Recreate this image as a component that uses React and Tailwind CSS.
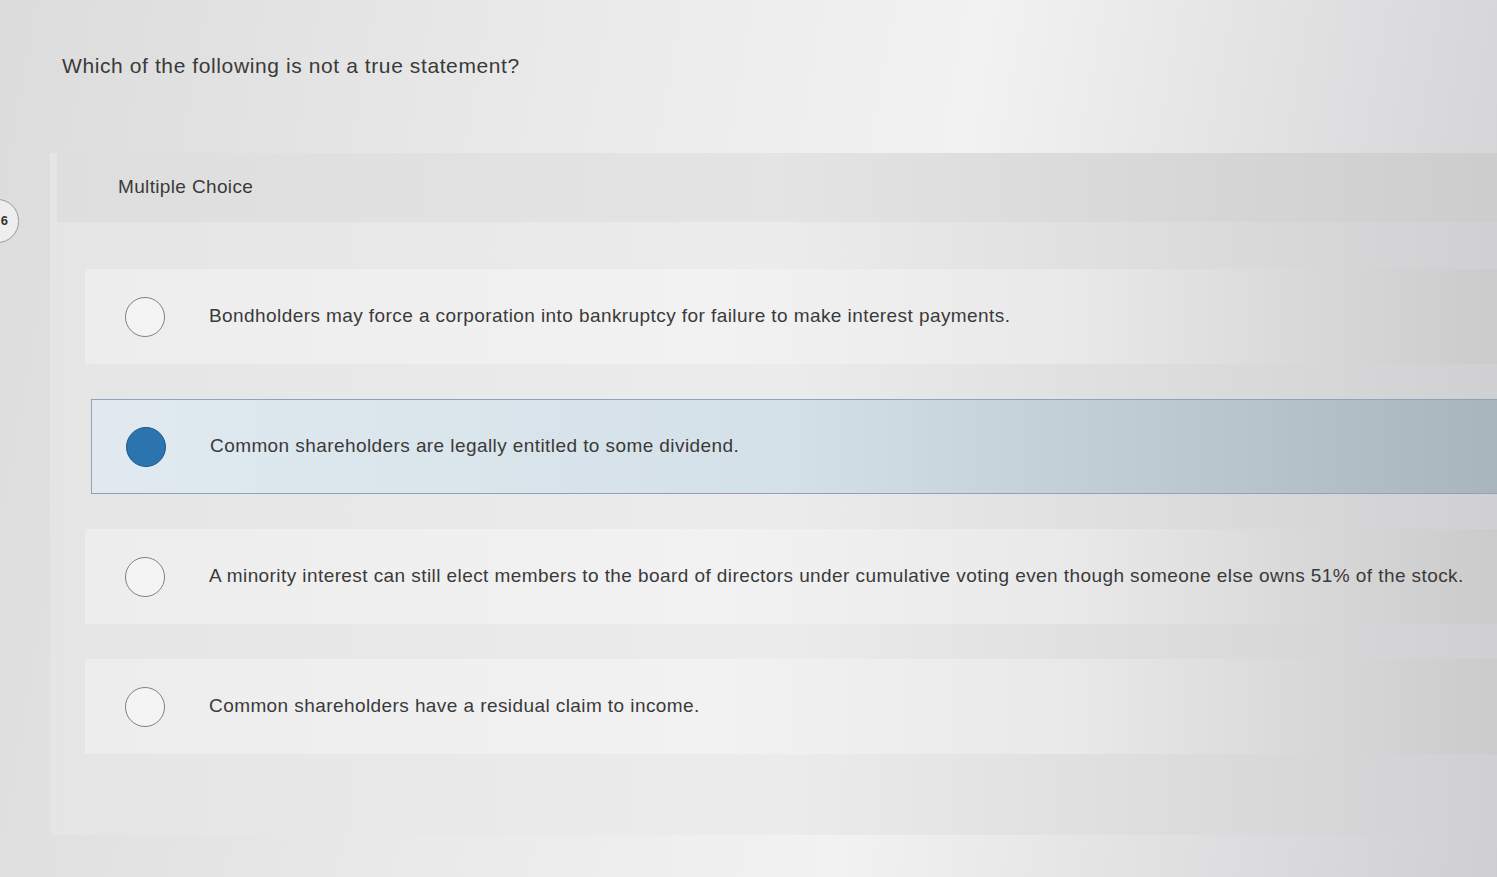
import React from 'react';

const options = [
  { text: 'Bondholders may force a corporation into bankruptcy for failure to make interest payments.', selected: false },
  { text: 'Common shareholders are legally entitled to some dividend.', selected: true },
  { text: 'A minority interest can still elect members to the board of directors under cumulative voting even though someone else owns 51% of the stock.', selected: false },
  { text: 'Common shareholders have a residual claim to income.', selected: false },
];

const Radio = ({ selected }) => (
  selected ? (
    <div className="w-[40px] h-[40px] rounded-full bg-[#2c74ad] border border-[#1f5a88] shrink-0" />
  ) : (
    <div className="w-[40px] h-[40px] rounded-full border-[1.5px] border-[#808080] bg-[#f4f4f4] shrink-0" />
  )
);

const Option = ({ text, selected }) => (
  <div
    className={
      selected
        ? 'flex items-center h-[95px] ml-[41px] pl-[34px] border border-r-0 border-[#8ea3b5] bg-[linear-gradient(90deg,#e0eaf0_0%,#d4e0e8_50%,#a9b5bd_100%)]'
        : 'flex items-center h-[95px] ml-[35px] pl-[40px] bg-[linear-gradient(90deg,#ededed_0%,#f2f2f2_45%,#e9e9e9_70%,#cbcbcc_100%)]'
    }
  >
    <Radio selected={selected} />
    <span className="ml-[44px] text-[19px] text-[#3a3a3a] whitespace-nowrap tracking-[0.42px]">{text}</span>
  </div>
);

export default function App() {
  return (
    <div
      className="relative w-[1497px] h-[877px] overflow-hidden bg-[linear-gradient(100deg,#dcdcdc_0%,#eaeaea_35%,#f2f2f2_60%,#cfcfd2_100%)]"
      style={{ fontFamily: '"Liberation Sans", Arial, sans-serif' }}
    >
      {/* question number badge */}
      <div className="absolute left-[-24px] top-[199px] w-[43px] h-[44px] rounded-full border border-[#9a9a9a] bg-[#eeeeee] flex items-center justify-end pr-[10px]">
        <span className="text-[13px] font-bold text-[#333]">6</span>
      </div>

      <div className="pt-[52px] pl-[62px]">
        <h1 className="text-[21px] text-[#3a3a3a] leading-[28px] tracking-[0.6px]">Which of the following is not a true statement?</h1>
      </div>

      <div className="mt-[73px] ml-[50px] h-[682px] bg-[linear-gradient(90deg,#e5e5e5_0%,#ececec_50%,#d0d0d2_100%)]">
        <div className="h-[69px] ml-[7px] flex items-center pl-[61px] bg-[linear-gradient(90deg,#dedede_0%,#e4e4e4_50%,#cdcdcd_100%)]">
          <span className="text-[19px] text-[#3a3a3a] tracking-[0.35px]">Multiple Choice</span>
        </div>
        <div className="pt-[47px] flex flex-col gap-[35px]">
          {options.map((o, i) => (
            <Option key={i} text={o.text} selected={o.selected} />
          ))}
        </div>
      </div>
    </div>
  );
}
